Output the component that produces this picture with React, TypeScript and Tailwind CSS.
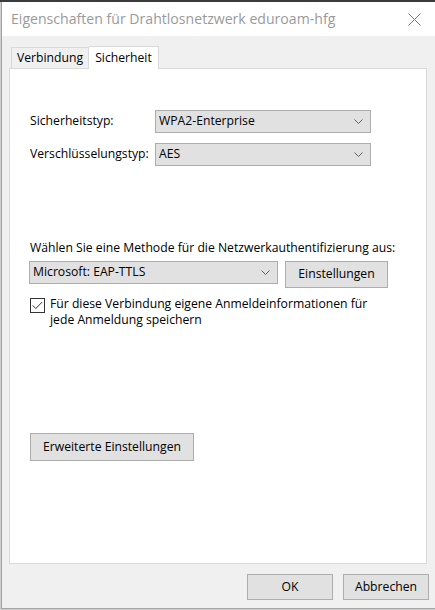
import React from "react";

const font = { fontFamily: '"Open Sans", "Noto Sans", sans-serif' };

function Chevron() {
  return (
    <svg width="9" height="5" viewBox="0 0 9 5" className="shrink-0">
      <path d="M0.5 0.5 L4.5 4.5 L8.5 0.5" fill="none" stroke="#606060" strokeWidth="1" />
    </svg>
  );
}

function Select({ value, w }: { value: string; w: string }) {
  return (
    <div className={`${w} h-[23px] border border-[#adadad] bg-[#e1e1e1] flex items-center justify-between pl-[3px] pr-[7px]`}>
      <span className="text-[12.2px] leading-none text-black">{value}</span>
      <Chevron />
    </div>
  );
}

function Button({ children, cls }: { children: React.ReactNode; cls: string }) {
  return (
    <div className={`${cls} border border-[#adadad] bg-[#e1e1e1] flex items-center justify-center text-[12.2px] text-black`}>
      {children}
    </div>
  );
}

export default function App() {
  return (
    <div style={font} className="w-[435px] h-[610px] bg-[#cfcfcf] flex flex-col overflow-hidden">
      <div className="h-[2px] bg-[#3b3b3b] shrink-0" />
      <div className="ml-px w-[434px] h-[607px] border-l border-b border-[#a3a3a3] bg-[#f0f0f0] flex flex-col shrink-0">
        {/* title bar */}
        <div className="h-[34px] bg-white flex items-center justify-between pl-[9px] pr-[14px] shrink-0">
          <span className="text-[14.1px] text-[#9a9a9a]">
            Eigenschaften für Drahtlosnetzwerk eduroam-hfg
          </span>
          <svg width="13" height="13" viewBox="0 0 13 13">
            <path d="M0.5 0.5 L12.5 12.5 M12.5 0.5 L0.5 12.5" stroke="#7a7a7a" strokeWidth="1" />
          </svg>
        </div>

        {/* tabs */}
        <div className="mt-[10px] ml-[9px] flex items-end h-[22px] shrink-0">
          <div className="h-[21px] pl-[5px] pr-[5px] border border-b-0 border-[#d9d9d9] bg-[#f0f0f0] flex items-center text-[12.2px] text-black">
            Verbindung
          </div>
          <div className="relative h-[23px] -mb-px px-[6px] border border-b-0 border-l-0 border-[#d9d9d9] bg-white flex items-center text-[12.2px] text-black z-10">
            Sicherheit
          </div>
        </div>

        {/* panel */}
        <div className="ml-[7px] w-[418px] h-[496px] border border-[#d9d9d9] bg-white flex flex-col pl-[20px] shrink-0">
          <div className="mt-[41px] flex items-center h-[23px]">
            <span className="w-[125px] text-[12.2px] text-black">Sicherheitstyp:</span>
            <Select value="WPA2-Enterprise" w="w-[216px]" />
          </div>
          <div className="mt-[10px] flex items-center h-[23px]">
            <span className="w-[125px] text-[12.2px] text-black">Verschlüsselungstyp:</span>
            <Select value="AES" w="w-[216px]" />
          </div>

          <div className="mt-[74px] h-[16px] leading-[16px] text-[12.2px] text-black">
            Wählen Sie eine Methode für die Netzwerkauthentifizierung aus:
          </div>

          <div className="mt-[5px] -ml-px flex items-start gap-[7px]">
            <div className="h-[24px] flex">
              <Select value="Microsoft: EAP-TTLS" w="w-[249px]" />
            </div>
            <Button cls="w-[103px] h-[27px]">Einstellungen</Button>
          </div>

          <div className="mt-[8px] flex items-start">
            <div className="mt-[2px] w-[15px] h-[15px] border border-[#333333] bg-white flex items-center justify-center shrink-0">
              <svg width="11" height="9" viewBox="0 0 11 9">
                <path d="M0.8 4.5 L3.8 7.5 L10.2 1" fill="none" stroke="#333333" strokeWidth="1" />
              </svg>
            </div>
            <div className="ml-[5px] text-[12.2px] leading-[16px] text-black">
              Für diese Verbindung eigene Anmeldeinformationen für
              <br />
              jede Anmeldung speichern
            </div>
          </div>

          <div className="mt-[105px]">
            <Button cls="w-[164px] h-[28px]">Erweiterte Einstellungen</Button>
          </div>
        </div>

        {/* bottom buttons */}
        <div className="mt-[10px] ml-[245px] flex gap-[10px] shrink-0">
          <Button cls="w-[86px] h-[26px]">OK</Button>
          <Button cls="w-[86px] h-[26px]">Abbrechen</Button>
        </div>
      </div>
    </div>
  );
}
